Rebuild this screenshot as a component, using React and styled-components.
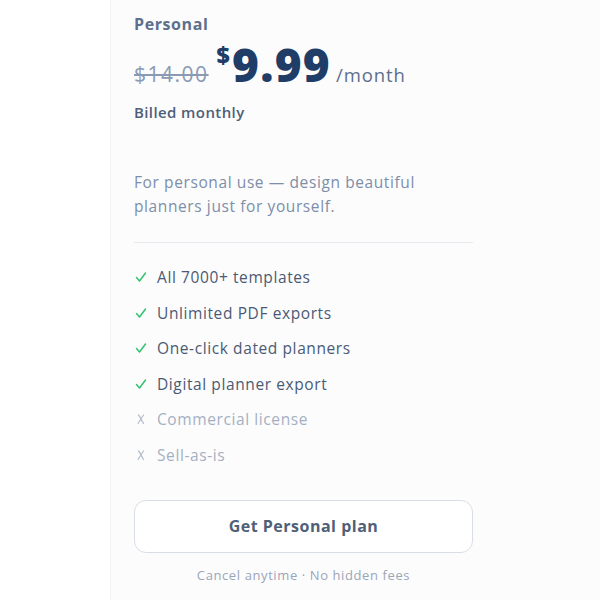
import React from "react";
import styled, { createGlobalStyle } from "styled-components";

const GlobalStyle = createGlobalStyle`
    html, body {
        margin: 0;
        padding: 0;
        background: #ffffff;
        font-family: "Open Sans", "Noto Sans", sans-serif;
    }
`

const features = [
    { text: "All 7000+ templates", included: true },
    { text: "Unlimited PDF exports", included: true },
    { text: "One-click dated planners", included: true },
    { text: "Digital planner export", included: true },
    { text: "Commercial license", included: false },
    { text: "Sell-as-is", included: false },
]

const Check = () => (
    <svg width="12" height="12" viewBox="0 0 12 12">
        <polyline points="1.5,6.5 4.5,10 10.5,2" fill="none" stroke="#34c26f" strokeWidth="1.5" strokeLinecap="round" strokeLinejoin="round" />
    </svg>
)

const Cross = () => (
    <svg width="12" height="12" viewBox="0 0 12 12">
        <path d="M3.5 2 C5.5 4, 6.5 7.5, 8.5 10.5 M8.5 2 L3 10.5" fill="none" stroke="#b4bdca" strokeWidth="1.2" strokeLinecap="round" />
    </svg>
)

const App = () => {
    return (
        <Page>
            <GlobalStyle />
            <Card>
                <PlanName>Personal</PlanName>
                <PriceRow>
                    <OldPrice>$14.00</OldPrice>
                    <Price>
                        <Currency>$</Currency>9.99
                    </Price>
                    <Period>/month</Period>
                </PriceRow>
                <Billing>Billed monthly</Billing>
                <Description>
                    For personal use — design beautiful planners just for yourself.
                </Description>
                <Divider />
                <FeatureList>
                    {features.map((f) => (
                        <Feature key={f.text} included={f.included}>
                            <Mark>{f.included ? <Check /> : <Cross />}</Mark>
                            {f.text}
                        </Feature>
                    ))}
                </FeatureList>
                <Button>Get Personal plan</Button>
                <Footnote>Cancel anytime · No hidden fees</Footnote>
            </Card>
        </Page>
    )
}

export default App

const Page = styled.div`
    width: 600px;
    height: 600px;
    overflow: hidden;
    display: flex;
    padding-left: 110px;
    box-sizing: border-box;
`

const Card = styled.div`
    flex: 1;
    background: #fcfcfd;
    border-left: 1px solid #f0f2f5;
    padding: 14px 0 0 23px;
    display: flex;
    flex-direction: column;
`

const PlanName = styled.div`
    font-size: 16px;
    font-weight: 700;
    letter-spacing: 0.6px;
    color: #5d6f8c;
    line-height: 20px;
`

const PriceRow = styled.div`
    display: flex;
    align-items: baseline;
    margin-top: -4px;
    height: 50px;
`

const OldPrice = styled.span`
    font-size: 21px;
    font-weight: 500;
    letter-spacing: 1.5px;
    color: #8a9ab2;
    text-decoration: line-through;
    margin-right: 8px;
`

const Price = styled.span`
    font-size: 46px;
    font-weight: 800;
    color: #1f3d66;
    letter-spacing: 1.2px;
    line-height: 50px;
`

const Currency = styled.span`
    font-size: 23px;
    vertical-align: 18px;
    margin-right: 1px;
`

const Period = styled.span`
    font-size: 18.5px;
    font-weight: 500;
    letter-spacing: 0.9px;
    color: #5d6f8c;
    margin-left: 5px;
`

const Billing = styled.div`
    font-size: 15px;
    font-weight: 600;
    letter-spacing: 0.4px;
    color: #4f5f78;
    margin-top: 22px;
    line-height: 20px;
`

const Description = styled.p`
    width: 320px;
    font-size: 15.5px;
    letter-spacing: 0.6px;
    line-height: 24px;
    color: #7d8ea8;
    margin: 48px 0 0;
`

const Divider = styled.hr`
    width: 339px;
    border: none;
    border-top: 1px solid #e6e9ee;
    margin: 24px 0 0;
`

const FeatureList = styled.ul`
    list-style: none;
    margin: 24px 0 0;
    padding: 0;
    display: flex;
    flex-direction: column;
    gap: 15.5px;
`

const Feature = styled.li`
    display: flex;
    align-items: center;
    font-size: 15.5px;
    letter-spacing: 0.6px;
    line-height: 20px;
    color: ${props => props.included ? "#4a5a74" : "#a4b0c2"};
`

const Mark = styled.span`
    width: 22px;
    display: flex;
    align-items: center;
    padding-left: 1px;
`

const Button = styled.button`
    width: 339px;
    height: 53px;
    margin-top: 35px;
    border: 1px solid #d9dee6;
    border-radius: 12px;
    background: #ffffff;
    font-family: inherit;
    font-size: 16px;
    font-weight: 700;
    letter-spacing: 0.5px;
    color: #4f5f78;
`

const Footnote = styled.div`
    width: 339px;
    text-align: center;
    font-size: 13px;
    letter-spacing: 0.6px;
    color: #9aa6b8;
    margin-top: 13px;
`
